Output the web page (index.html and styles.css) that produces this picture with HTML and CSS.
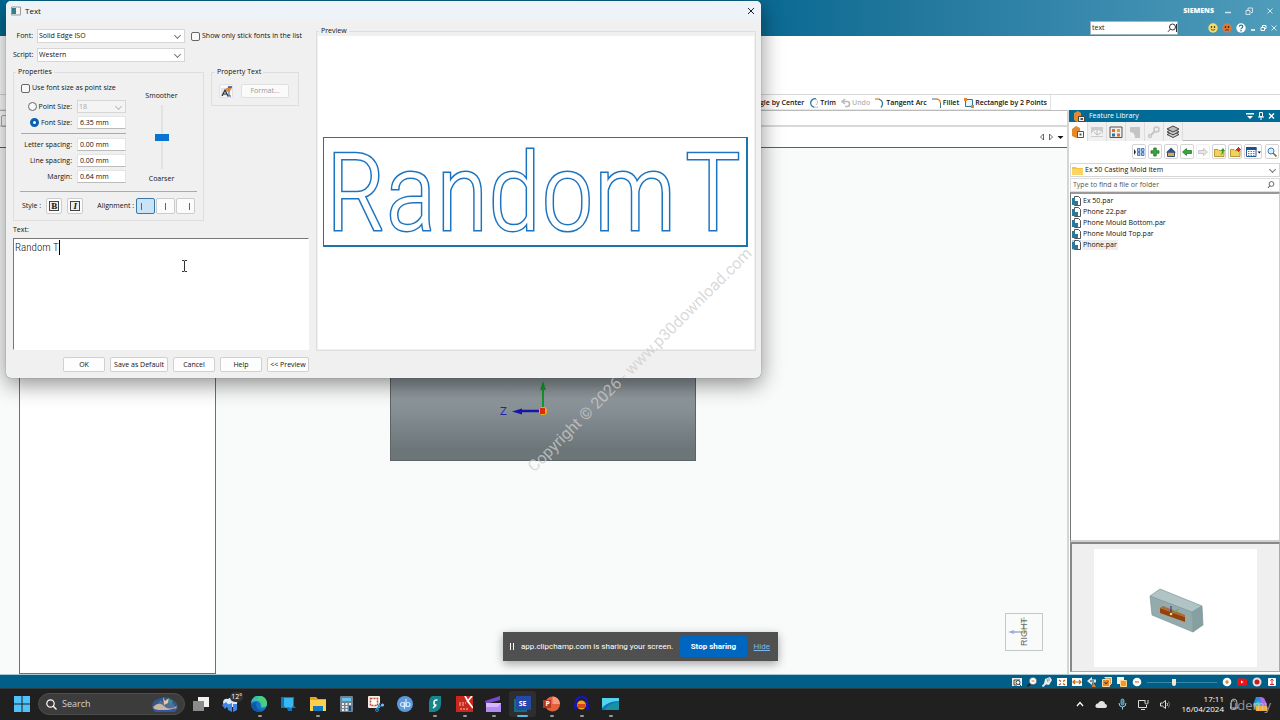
FILE: index.html
```html
<!DOCTYPE html>
<html lang="en">
<head>
    <meta charset="UTF-8">
    <meta name="viewport" content="width=device-width, initial-scale=1.0">
    <title>Solid Edge - Text</title>
    <link rel="stylesheet" href="styles.css">
</head>
<body>
    <!-- Title bar -->
    <header class="titlebar">
        <div class="title-row">
            <span class="brand">SIEMENS</span>
            <button class="win-btn" aria-label="Minimize"><svg width="8" height="8"><path d="M1 5.500h6" stroke="#cfe3ec" stroke-width="1.500"/></svg></button>
            <button class="win-btn" aria-label="Restore"><svg width="8" height="8"><path d="M1 3.500h4v4H1zM3 3V1h4.500v4.500H6" fill="none" stroke="#cfe3ec"/></svg></button>
            <button class="win-btn" aria-label="Close"><svg width="8" height="8"><path d="M1.500 1.500l5 5M6.500 1.500l-5 5" stroke="#cfe3ec"/></svg></button>
        </div>
        <div class="tool-row">
            <div class="command-search">
                <input type="text" value="text" aria-label="Command search">
                <svg width="10" height="10"><circle cx="5.500" cy="4" r="3" fill="none" stroke="#333"/><path d="M3.300 6.200L1 8.800M9.500 1v8" stroke="#333"/></svg>
            </div>
            <div class="tool-icons">
                <svg width="10" height="10"><circle cx="5" cy="5" r="4.700" fill="#f3dc6c"/><circle cx="3.500" cy="4" r=".8"/><circle cx="6.500" cy="4" r=".8"/><path d="M2.800 6.300q2.200 2 4.400 0" fill="none" stroke="#4d3b00" stroke-width=".8"/></svg>
                <svg width="10" height="10"><circle cx="5" cy="5" r="4.700" fill="#d9793a"/><circle cx="3.500" cy="4" r=".8"/><circle cx="6.500" cy="4" r=".8"/><path d="M3 7.500q2-2 4 0" fill="none" stroke="#5a1c00" stroke-width=".8"/></svg>
                <svg width="10" height="10"><circle cx="5" cy="5" r="4.700" fill="#fff"/><path d="M3.300 3.800q.2-1.700 1.800-1.700t1.700 1.500q0 .8-1 1.400t-.7 1.300" fill="none" stroke="#2d6e93" stroke-width="1.200"/><circle cx="5" cy="7.800" r=".8" fill="#2d6e93"/></svg>
                <svg width="6" height="8"><path d="M1 6h4" stroke="#fff" stroke-width="1.500"/></svg>
                <svg width="7" height="8"><path d="M1 3.500h3.500v3H1zM2.500 3V1.500H6v3H5" fill="none" stroke="#fff"/></svg>
                <svg width="6" height="8"><path d="M.5 1.500l5 5M5.500 1.500l-5 5" stroke="#d5e7ef"/></svg>
            </div>
        </div>
    </header>

    <div class="ribbon"></div>

    <div class="command-bar">
        <div class="commands">
            <button class="command">Rectangle by Center</button>
            <button class="command"><svg width="10" height="10"><path d="M7 .8A4.200 4.200 0 1 0 5 9.200" fill="none" stroke="#2f7796" stroke-width="1.300"/><path d="M7 1q3 3 0 6M5 9.200h4" fill="none" stroke="#999" stroke-dasharray="1.500 1"/></svg>Trim</button>
            <button class="command disabled"><svg width="10" height="10"><path d="M4 1L1 3.500 4 6M1.500 3.500H6a2.500 2.500 0 0 1 0 5H4" fill="none" stroke="#bbb" stroke-width="1.600"/></svg>Undo</button>
            <button class="command"><svg width="10" height="10"><path d="M0 1h4" stroke="#e08a2c" stroke-width="1.300"/><path d="M4 1q6 3 2 8.500" fill="none" stroke="#2f7796" stroke-width="1.300"/></svg>Tangent Arc</button>
            <button class="command"><svg width="10" height="10"><path d="M0 1h4" stroke="#2f7796"/><path d="M4 1q4 0 4.500 4" fill="none" stroke="#e08a2c" stroke-width="1.300"/><path d="M8.500 5v5" stroke="#2f7796"/></svg>Fillet</button>
            <button class="command"><svg width="10" height="10"><path d="M1.500 1.500h7v7h-7z" fill="#e9f4f9" stroke="#2f7796"/><path d="M0 0h3v3H0zM7 7h3v3H7z" fill="#e08a2c"/></svg>Rectangle by 2 Points</button>
        </div>
    </div>

    <main class="workspace">
        <section class="document">
            <div class="doc-strip"><span class="doc-grip"></span></div>
            <div class="doc-tabs">
                <svg width="6" height="8"><path d="M4.500 1v6L1.500 4z" fill="#fff" stroke="#444" stroke-width=".8"/></svg>
                <svg width="6" height="8"><path d="M1.500 1v6L4.500 4z" fill="#fff" stroke="#444" stroke-width=".8"/></svg>
                <svg width="7" height="8"><path d="M.5 3h6L3.500 6z" fill="#111"/></svg>
            </div>
            <div class="canvas">
                <div class="pathfinder"></div>
                <div class="model">
                    <svg width="60" height="50" class="axes">
                        <text x="3" y="42" class="axis-label">Z</text>
                        <path d="M45 38H25" stroke="#1616a8" stroke-width="2.500"/>
                        <path d="M15 38.500l10-3v6z" fill="#1616a8"/>
                        <path d="M46 37V17" stroke="#129a2c" stroke-width="2"/>
                        <path d="M46 8l-3 9h6z" fill="#129a2c"/>
                        <circle cx="46" cy="38" r="4" fill="#f0b400"/>
                        <path d="M43 35h5v6h-5z" fill="#e02a10"/>
                    </svg>
                </div>
                <div class="view-cube">
                    <svg width="36" height="36"><path d="M18 18V3" stroke="#9fe0a8" stroke-width="1.500"/><path d="M18 18H7" stroke="#a6a6e0" stroke-width="1.500"/><path d="M2 18l6-2v4z" fill="#a6a6e0"/><circle cx="18" cy="18" r="2" fill="#d8d06a"/></svg>
                    <span>RIGHT</span>
                </div>
            </div>
        </section>

        <!-- Feature Library -->
        <aside class="library">
            <div class="library-title">
                <svg width="12" height="11"><path d="M1 2l4-2 3 2v8l-4 1-3-2z" fill="#e58a2b"/><path d="M5.500 5.500h6v5h-6z" fill="#eee" stroke="#444"/><path d="M7.500 7h2.500v2H7.500z" fill="#555"/></svg>
                <span>Feature Library</span>
                <svg width="8" height="8"><path d="M0 1h8v1.500H0zM1 4h6L4 7z" fill="#fff"/></svg>
                <svg width="6" height="8"><path d="M1.500.5h3v4h-3zM0 5h6M3 5v3" fill="none" stroke="#fff"/></svg>
                <svg width="7" height="8"><path d="M1 1.500l5 5M6 1.500l-5 5" stroke="#fff" stroke-width="1.400"/></svg>
            </div>
            <div class="library-tabs">
                <button class="tab active" aria-label="Library"><svg width="14" height="14"><path d="M1 4l4-3 4 2v9l-4 1-4-2z" fill="#e58a2b"/><path d="M6.500 6.500h6v6h-6z" fill="#fff" stroke="#555"/><path d="M8.500 8.500h2v2h-2z" fill="#555"/></svg></button>
                <button class="tab" aria-label="Web"><svg width="14" height="14"><path d="M1 2h12v10H1z" fill="#ccc"/><path d="M1 11a6 6 0 0 1 12 0z" fill="#f4f4f4"/><path d="M7 10L4 7M7 10l4-2M7 10V5" stroke="#bbb"/></svg></button>
                <button class="tab" aria-label="Parts"><svg width="14" height="14"><path d="M1 2h12v10.500H1z" fill="#eee" stroke="#555"/><path d="M3 4h3v3H3zM8 8.500h3v3H8z" fill="#e06a2b"/><path d="M8 4h3v3H8z" fill="#e5a32b"/><path d="M3 8.500h3v3H3z" fill="#2f7796"/></svg></button>
                <button class="tab" aria-label="Sheets"><svg width="14" height="14"><path d="M2 2h10v11H2z" fill="#c4c4c4"/><path d="M2 7q5 0 5 6H2z" fill="#f2f2f2"/></svg></button>
                <button class="tab" aria-label="Links"><svg width="14" height="14"><circle cx="9.500" cy="4.500" r="2.500" fill="none" stroke="#c4c4c4" stroke-width="1.500"/><circle cx="3" cy="11" r="1.500" fill="none" stroke="#c4c4c4" stroke-width="1.300"/><path d="M8 6L4 10" stroke="#c4c4c4" stroke-width="1.800"/></svg></button>
                <button class="tab" aria-label="Layers"><svg width="14" height="14"><path d="M1 9.500L7 6.500l6 3-6 3z" fill="#ccc" stroke="#444"/><path d="M1 6.800L7 3.800l6 3-6 3z" fill="#ccc" stroke="#444"/><path d="M1 4L7 1l6 3-6 3z" fill="#bbb" stroke="#444"/></svg></button>
                <span class="tab-rest"></span>
            </div>
            <div class="library-tools">
                <button aria-label="Tree"><svg width="11" height="10"><path d="M0 2l2 3-2 3z" fill="#223"/><path d="M3.500 1.500H6v3H3.500zM7.500 1.500H10v3H7.500zM3.500 5.500H6v3H3.500zM7.500 5.500H10v3H7.500z" fill="#9cc4ee" stroke="#3566b0" stroke-width=".8"/></svg></button>
                <button aria-label="Add"><svg width="10" height="10"><path d="M3.700 1h2.600v2.700H9v2.600H6.300V9H3.700V6.300H1V3.700h2.700z" fill="#34a83a" stroke="#1d6b22" stroke-width=".7"/></svg></button>
                <button aria-label="Home"><svg width="10" height="10"><path d="M1.500 5h7v4.500h-7z" fill="#d9a95a" stroke="#37506d"/><path d="M0 5.500L5 .5l5 5z" fill="#2f5488"/></svg></button>
                <button aria-label="Back"><svg width="10" height="10"><path d="M.5 5L4.500 1.500v2H9.500v3h-5v2z" fill="#34a83a" stroke="#1d6b22" stroke-width=".7"/></svg></button>
                <button class="off" aria-label="Forward"><svg width="10" height="10"><path d="M9.500 5l-4-3.500v2H.5v3h5v2z" fill="#e6e6e6" stroke="#bbb" stroke-width=".8"/></svg></button>
                <button aria-label="Up"><svg width="11" height="10"><path d="M.5 2.500H4l1 1h5v6H.5z" fill="#f0d25e" stroke="#a98417" stroke-width=".8"/><path d="M5 8q3 0 3-4H6.500L9 1l2 3H9.500q0 4-4.500 4z" fill="#2b9a35"/></svg></button>
                <button aria-label="New folder"><svg width="11" height="10"><path d="M.5 2.500H4l1 1h5v6H.5z" fill="#f0d25e" stroke="#a98417" stroke-width=".8"/><path d="M8.500 0v5M6 2.500h5M7 1l3.200 3.200M10 1L7 4.200" stroke="#d62a1c"/></svg></button>
                <button class="wide" aria-label="Views"><svg width="15" height="10"><path d="M.5.5h9.500v9H.5z" fill="#fff" stroke="#2a5a9a"/><path d="M0 0h10.500v3H0z" fill="#1f4f96"/><path d="M2 4.500h7M2 6.500h7M2 8.300h7" stroke="#4d86c4" stroke-dasharray="1.500 1"/><path d="M11.500 4.500h3.500L13.300 6.500z" fill="#111"/></svg></button>
                <button class="find" aria-label="Find"><svg width="10" height="10"><circle cx="4" cy="4" r="3" fill="#d8efff" stroke="#3a7db5"/><path d="M6.200 6.200L9.500 9.500" stroke="#8a6a3a" stroke-width="1.600"/></svg></button>
            </div>
            <div class="combo folder-combo">
                <svg width="11" height="9"><path d="M0 1h4l1 1h6v7H0z" fill="#f5c242"/><path d="M0 3h11v6H0z" fill="#fbd667"/></svg>
                <select aria-label="Folder"><option>Ex 50 Casting Mold Item</option></select>
            </div>
            <div class="file-search">
                <input type="text" placeholder="Type to find a file or folder" aria-label="Find file">
                <svg width="8" height="8"><circle cx="4.500" cy="3" r="2.400" fill="none" stroke="#444" stroke-width=".8"/><path d="M2.800 4.800L.8 7" stroke="#444"/></svg>
            </div>
            <ul class="files">
                <li><svg class="par" width="9" height="10"><use href="#par"/></svg><span>Ex 50.par</span></li>
                <li><svg class="par" width="9" height="10"><use href="#par"/></svg><span>Phone 22.par</span></li>
                <li><svg class="par" width="9" height="10"><use href="#par"/></svg><span>Phone Mould Bottom.par</span></li>
                <li><svg class="par" width="9" height="10"><use href="#par"/></svg><span>Phone Mould Top.par</span></li>
                <li class="selected"><svg class="par" width="9" height="10"><use href="#par"/></svg><span>Phone.par</span></li>
            </ul>
            <div class="file-preview">
                <div class="preview-card">
                    <svg width="60" height="50">
                        <path d="M4 10L14 3l42 17-10 8z" fill="#b0c4c5"/>
                        <path d="M4 10l42 16 1 20L6 29z" fill="#93abad"/>
                        <path d="M46 26l10-6 1 19-10 7z" fill="#86a0a2"/>
                        <path d="M4 10l42 16 1 20L6 29zM4 10L14 3l42 17-10 6M56 20l1 19-10 7" fill="none" stroke="#7d9597" stroke-width=".7"/>
                        <path d="M14 22l25 9v5L14 27z" fill="#96400a"/><path d="M14 22l3-2 22 9v2z" fill="#b06a35"/>
                        <path d="M25 28V20" stroke="#27278f"/><path d="M25 28l8-5" stroke="#5fae4c"/><circle cx="25" cy="28" r="1.200" fill="#ffe75a"/>
                    </svg>
                </div>
            </div>
        </aside>
    </main>

    <!-- Status bar -->
    <div class="statusbar">
        <svg width="10" height="10"><path d="M0 1h10v8H0z" fill="#eee"/><path d="M2 3v5M2 3h6M2 8h3" stroke="#444" fill="none"/><circle cx="6" cy="5.500" r="2" fill="#fff" stroke="#444"/><path d="M7 7l2 2" stroke="#444"/></svg>
        <svg width="10" height="10"><path d="M3.500 6.500L.5 9.500" stroke="#222" stroke-width="1.800"/><circle cx="6" cy="4" r="3.600" fill="#fff" stroke="#555" stroke-width=".5"/><path d="M4.500 4h3" stroke="#c77b2d"/></svg>
        <svg width="10" height="10"><path d="M3.500 6.500L.5 9.500" stroke="#ddd" stroke-width="2"/><path d="M3 2l5-2 2 3-3 5-5-1z" fill="#e8eef0"/><path d="M5 2l1 3M7 1v3" stroke="#89a"/></svg>
        <svg width="10" height="10"><path d="M0 1h10v8H0z" fill="#fff"/><path d="M2 3l2 1.500M8 3L6 4.500M2 8l2-1.500M8 8L6 6.500" stroke="#b8641a" stroke-width="1.300"/></svg>
        <svg width="10" height="10"><path d="M0 1h10v8H0z" fill="#fff"/><path d="M1 5h8M3 3L1 5l2 2M7 3l2 2-2 2" fill="none" stroke="#c26c1c" stroke-width="1.200"/></svg>
        <svg width="10" height="10"><path d="M5 0L0 4l5 4V5.500h4v-3H5z" fill="#dfe6e9"/><path d="M6 5l3 5H5z" fill="#e0832a"/><path d="M3 4h4" stroke="#333"/></svg>
        <svg width="10" height="10"><path d="M2.500.5h7v6l-2 2" fill="#d6a05a" stroke="#ffe2b5"/><path d="M.5 2.500h7v7h-7z" fill="#e68a25" stroke="#ffd9a5"/><path d="M2.500 5l1.500 2 2-2.500" fill="none" stroke="#333"/></svg>
        <svg width="10" height="10"><path d="M0 0h7v7H0z" fill="#f6f2ea"/><path d="M3.500 3.500h6v6h-6z" fill="#ef9a2c" stroke="#ffd596"/></svg>
        <svg width="10" height="10"><circle cx="5" cy="5" r="4.300" fill="#fff"/><path d="M3 5h4" stroke="#c77b2d" stroke-width="1.200"/></svg>
        <input type="range" class="zoom" min="0" max="100" value="38" aria-label="Zoom">
        <svg width="10" height="10"><circle cx="5" cy="5" r="4.300" fill="#fff"/><path d="M3 5h4M5 3v4" stroke="#c77b2d" stroke-width="1.200"/></svg>
        <svg width="10" height="10"><rect y="1.500" width="10" height="7" rx="1.500" fill="#f01212"/><path d="M4 3.500v3L6.500 5z" fill="#fff"/></svg>
        <svg width="10" height="10"><circle cx="5" cy="5" r="4.500" fill="#e9dede"/><circle cx="5" cy="5" r="2.500" fill="#cc1b1b"/></svg>
        <svg width="10" height="10"><rect x="1" y="1" width="8" height="8" rx="1" fill="#fff"/><path d="M5 7V2M3.500 3.500L5 2l1.500 1.500M3 7.500h4" fill="none" stroke="#c22"/></svg>
    </div>

    <!-- Windows taskbar -->
    <footer class="taskbar">
        <button class="start" aria-label="Start"><svg width="16" height="16"><path d="M0 0h7.500v7.500H0zM8.500 0H16v7.500H8.500zM0 8.500h7.500V16H0zM8.500 8.500H16V16H8.500z" fill="#4fc3f7"/></svg></button>
        <div class="task-search">
            <svg width="11" height="11"><circle cx="4.500" cy="4.500" r="3.700" fill="none" stroke="#fff" stroke-width="1.200"/><path d="M7.300 7.300L10.500 10.500" stroke="#fff" stroke-width="1.300"/></svg>
            <input type="text" placeholder="Search" aria-label="Search">
            <svg width="28" height="16">
                <path d="M1 12Q1 4 7 3q8-4 15 1 5 3 5 8l-3 4H4z" fill="#34568c"/>
                <path d="M3 12l7-8 4 5 4-7 8 11z" fill="#4f6f9a"/>
                <path d="M2 11q6-6 11-1t13 0l-2 4H4z" fill="#c8b7a0"/><path d="M12 1l2 4 4-3-1 5-4 2z" fill="#e9c6a3"/>
                <path d="M3 13q10 3 22-1l-2 4H5z" fill="#3552a5"/><path d="M17 2l5 3-3 4z" fill="#2f9187"/>
            </svg>
        </div>
        <nav class="apps">
            <button class="app" aria-label="Task view"><svg width="16" height="16"><path d="M5 1h11v10H5z" fill="#f2f2f2"/><path d="M0 5h11v10H0z" fill="#8b8b8b"/></svg></button>
            <button class="app weather" aria-label="Weather"><svg width="16" height="16"><path d="M1 6q1-4 5-3 3-3 6 0 4 1 3 5l-1 3H2z" fill="#dfe9f6"/><path d="M0 9l4-3 3 3-4 4zM5 9l5-2v9l-4-2zM11 8h4v6l-4 2z" fill="#3f86e8"/></svg><span>12°</span></button>
            <button class="app running" aria-label="Edge"><svg width="16" height="16"><circle cx="8" cy="8" r="8" fill="#1673c4"/><path d="M0 7a8 8 0 0 1 16 1q0 4-5 3.500-2-.5-1-2Q9 5 5 5 2 5 0 7z" fill="#34c1b5"/><path d="M8 0q7 0 8 7-1 4-5 4 2-6-5-7z" fill="#4fce77"/><path d="M5 8q0 6 7 7Q3 18 0 9q2-3 6-3Q5 7 5 8z" fill="#0d56a8"/></svg></button>
            <button class="app" aria-label="Devices"><svg width="16" height="16"><path d="M1 1h13v9l2 2h-4v3H8l-1-3H1z" fill="#1174bd"/><path d="M4 2h9v8l-2 2-3-1-2 1-2-2z" fill="#3bb7ef"/></svg></button>
            <button class="app running" aria-label="Explorer"><svg width="16" height="16"><path d="M0 1h6l2 2h8v12H0z" fill="#e9a51f"/><path d="M0 4h16v11H0z" fill="#ffd04d"/><path d="M3 10h10v5H3z" fill="#1279c7"/></svg></button>
            <button class="app" aria-label="Calculator"><svg width="14" height="16"><rect width="13" height="16" rx="1" fill="#75818c"/><path d="M2 2h9v3H2z" fill="#62c5f2"/><path d="M2 7h2v2H2zM5.500 7h2v2h-2zM9 7h2v2H9zM2 10h2v2H2zM5.500 10h2v2h-2zM2 13h2v2H2zM5.500 13h2v2h-2z" fill="#e7edf2"/><path d="M9 10h2v5H9z" fill="#164e85"/></svg></button>
            <button class="app" aria-label="Snipping tool"><svg width="16" height="16"><rect width="12" height="12" rx="1" fill="#f4eeee"/><path d="M2.500 2.500h7v7h-7z" fill="#fff" stroke="#c34a2b" stroke-width="1.500" stroke-dasharray="2 1"/><path d="M9 14l3-7M15 9l-6 3" stroke="#1f8bd0" stroke-width="1.300"/><circle cx="9" cy="14" r="1.500" fill="none" stroke="#1f8bd0"/><circle cx="14.500" cy="9" r="1.500" fill="#7ec3ef"/></svg></button>
            <button class="app" aria-label="qBittorrent"><svg width="16" height="16"><circle cx="8" cy="8" r="8" fill="#5c9adb"/><circle cx="5.500" cy="8.500" r="2" fill="none" stroke="#d4e9ff" stroke-width="1.200"/><path d="M7.500 6v7M9 3v8" stroke="#d4e9ff" stroke-width="1.200"/><circle cx="11" cy="8.500" r="2" fill="none" stroke="#d4e9ff" stroke-width="1.200"/></svg></button>
            <button class="app running" aria-label="VPN"><svg width="14" height="16"><path d="M4 0h9v8q0 6-6 8H1V7q0-5 3-7z" fill="#16858c"/><path d="M9.500 4Q6 3.500 6 6.500T7.500 9 5 12" fill="none" stroke="#fff" stroke-width="1.600"/></svg></button>
            <button class="app running" aria-label="PDF"><svg width="17" height="16"><path d="M0 0h17v16H0z" fill="#c8281c"/><path d="M9 0q3 6 8 12M16 0l-5 6" stroke="#fff" stroke-width="1.700" fill="none"/><path d="M3 7h7M3 9h5M4 13h9" stroke="#f4b9b2" stroke-dasharray="2 1"/></svg></button>
            <button class="app running" aria-label="Clipchamp"><svg width="17" height="16"><path d="M0 5l15-5v4L1 8z" fill="#7a49cf"/><path d="M1 7h15v9H1z" fill="#b48bf2"/><path d="M1 7h15l-3 4H1z" fill="#d4b8ff"/></svg></button>
            <button class="app running current" aria-label="Solid Edge"><svg width="17" height="16"><path d="M0 3h13v13H0z" fill="#12707d"/><path d="M2 0h15v14H2z" fill="#2448a8"/></svg><span>SE</span></button>
            <button class="app running ppt" aria-label="PowerPoint"><svg width="17" height="16"><circle cx="9.500" cy="8" r="7.500" fill="#e2603c"/><path d="M9.500.5A7.500 7.500 0 0 1 17 8H9.500z" fill="#f59a7c"/><path d="M0 4h8v8H0z" fill="#b8371c"/></svg><span>P</span></button>
            <button class="app running" aria-label="Audacity"><svg width="17" height="16"><path d="M3 12Q1 1 8.500 1T14 12" fill="none" stroke="#1616c8" stroke-width="2"/><circle cx="8.500" cy="9" r="4.500" fill="#f0a31b"/><path d="M4.500 9h8M5 11h7" stroke="#d42b14" stroke-width="1.500"/><path d="M1 8h3v6H1zM13 8h3v6h-3z" fill="#1616a0"/></svg></button>
            <button class="app running" aria-label="Photos"><svg width="17" height="14"><path d="M0 1h17v12H0z" fill="#0f75b5"/><path d="M0 1h17v3Q6 4 0 11z" fill="#53d3ee"/><path d="M3 13Q6 6 17 5v8z" fill="#1792a5"/></svg></button>
        </nav>
        <div class="tray">
            <svg width="8" height="8"><path d="M1 6l3-3.500L7 6" fill="none" stroke="#fff" stroke-width="1.200"/></svg>
            <svg width="12" height="10"><path d="M3 9Q0 9 .5 6.500T3 4.500Q4 1.500 7 2t3 3q2 0 2 2t-2 2z" fill="#e2e2e2"/></svg>
            <svg width="9" height="12"><rect x="3" y="1" width="3" height="6" rx="1.500" fill="#3c7f99" stroke="#8fd3ea" stroke-width=".7"/><path d="M1 5q0 4 3.500 4T8 5M4.500 9v2.500" fill="none" stroke="#8fd3ea"/></svg>
            <svg width="11" height="11"><path d="M7 1.500H.5v7h8V6M3 10.500h4M7 1v3q0 1 1.500 1T10 4V1" fill="none" stroke="#ddd"/></svg>
            <svg width="11" height="11"><path d="M.5 4h2l3-2.500v8L2.500 7h-2zM7 4q1 1.500 0 3" fill="none" stroke="#ddd"/><path d="M8.500 2.500q2 3 0 6" fill="none" stroke="#777"/></svg>
            <div class="clock"><span>17:11</span><span>16/04/2024</span></div>
            <svg class="bell" width="10" height="12"><path d="M2 9V5q0-4 3-4t3 4v4l1 1H1zM4 11h2" fill="none" stroke="#bbb"/></svg>
            <svg class="copilot" width="16" height="16"><path d="M4 1h6l2 4-4 10H4L1 9z" fill="#2b8fe0"/><path d="M8 1l4 1 3 6-3 6H7l2-6z" fill="#b26ae8"/><path d="M2 8l5-3 2 5-4 5z" fill="#48c3b8"/><path d="M4 10h11v5H4z" fill="#f2b23a"/></svg>
            <span class="udemy">ûdemy</span>
        </div>
    </footer>

    <!-- Text dialog -->
    <form class="dialog">
        <div class="dialog-title">
            <svg width="10" height="10"><path d="M.5 1h9v8h-9z" fill="#f5f5f5" stroke="#999"/><path d="M1 2h4v6H1z" fill="#2f8088"/></svg>
            <span>Text</span>
            <button type="button" aria-label="Close"><svg width="8" height="8"><path d="M1 1l6 6M7 1L1 7" stroke="#222"/></svg></button>
        </div>
        <div class="dialog-body">
            <div class="settings">
                <div class="font-grid">
                    <label for="font">Font:</label>
                    <div class="combo"><select id="font"><option>Solid Edge ISO</option></select></div>
                    <label class="check"><input type="checkbox">Show only stick fonts in the list</label>
                    <label for="script">Script:</label>
                    <div class="combo"><select id="script"><option>Western</option></select></div>
                </div>
                <div class="groups">
                    <fieldset class="properties">
                        <legend>Properties</legend>
                        <div class="sizes">
                            <div class="size-fields">
                                <label class="check use-point"><input type="checkbox">Use font size as point size</label>
                                <div class="field">
                                    <label class="check"><input type="radio" name="size">Point Size:</label>
                                    <div class="combo off"><select aria-label="Point size" disabled><option>18</option></select></div>
                                </div>
                                <div class="field">
                                    <label class="check"><input type="radio" name="size" checked>Font Size:</label>
                                    <input type="text" value="6.35 mm" aria-label="Font size">
                                </div>
                                <hr>
                                <div class="field"><label for="letter">Letter spacing:</label><input type="text" id="letter" value="0.00 mm"></div>
                                <div class="field"><label for="line">Line spacing:</label><input type="text" id="line" value="0.00 mm"></div>
                                <div class="field"><label for="margin">Margin:</label><input type="text" id="margin" value="0.64 mm"></div>
                            </div>
                            <div class="smoothness">
                                <label for="smooth">Smoother</label>
                                <input type="range" id="smooth" min="0" max="100" value="50">
                                <span>Coarser</span>
                            </div>
                        </div>
                        <hr class="wide-rule">
                        <div class="style-row">
                            <span>Style :</span>
                            <button type="button" class="bold"><b>B</b></button>
                            <button type="button" class="italic"><b>I</b></button>
                            <span class="align-label">Alignment :</span>
                            <div class="align">
                                <button type="button" class="left on" aria-label="Left"><i></i></button>
                                <button type="button" class="center" aria-label="Center"><i></i></button>
                                <button type="button" class="right" aria-label="Right"><i></i></button>
                            </div>
                        </div>
                    </fieldset>
                    <fieldset class="property-text">
                        <legend>Property Text</legend>
                        <button type="button" class="pick" aria-label="Property text"><svg width="11" height="11"><path d="M0 2h6v8H0z" fill="#dfe4ee"/><path d="M1 10l3-6 3 6M2 8h4" fill="none" stroke="#233" stroke-width="1.200"/><path d="M8 4v6M6 10h4" stroke="#3a4f8f"/><path d="M4 3l4-2 3 1-2 3-3 1z" fill="#d98a3c"/><path d="M7 1h4" stroke="#2a4c9c" stroke-width="1.500"/></svg></button>
                        <button type="button" class="format" disabled>Format...</button>
                    </fieldset>
                </div>
                <label class="text-label" for="content">Text:</label>
                <div class="editor">
                    <textarea id="content" spellcheck="false">Random T</textarea>
                    <span class="caret"></span>
                    <svg class="ibeam" width="7" height="12"><path d="M1 .5h2l.5.500.500-.500h2M1 11.500h2l.5-.500.500.500h2M3.500 1v10" fill="none" stroke="#333"/></svg>
                </div>
                <div class="buttons">
                    <button type="button">OK</button>
                    <button type="button" class="save">Save as Default</button>
                    <button type="button">Cancel</button>
                    <button type="button">Help</button>
                    <button type="button">&lt;&lt; Preview</button>
                </div>
            </div>
            <fieldset class="preview">
                <legend>Preview</legend>
                <div class="sheet">
                    <div class="outline"><span>Random</span><span>T</span></div>
                </div>
            </fieldset>
        </div>
    </form>

    <div class="share-bar">
        <span class="pause"></span>
        <span>app.clipchamp.com is sharing your screen.</span>
        <button>Stop sharing</button>
        <a href="#">Hide</a>
    </div>

    <div class="watermark">Copyright © 2026 - www.p30download.com</div>

    <svg class="defs" width="0" height="0">
        <symbol id="par" viewBox="0 0 9 10"><path d="M2.500.5h4l2 2v7h-6z" fill="#fff" stroke="#555"/><path d="M0 2h3v3h3v4H0z" fill="#2f7796"/></symbol>
    </svg>
</body>
</html>
```
FILE: styles.css
```css
* {
    margin: 0;
    padding: 0;
    box-sizing: border-box;
}

body {
    font-family: "Open Sans", "Noto Sans", sans-serif;
    font-size: 7px;
    line-height: 10px;
    color: #111;
    height: 100vh;
    overflow: hidden;
    display: flex;
    flex-direction: column;
    background: #fff;
}

button, input, select, textarea {
    font: inherit;
    color: inherit;
    border: none;
    background: none;
    outline: none;
}

input, select {
    min-width: 0;
}

svg {
    display: block;
    flex: none;
}

.defs {
    position: absolute;
}

/* Title bar */
.titlebar {
    height: 36px;
    background: linear-gradient(90deg, #006a92 0%, #00648d 55%, #0b6a93 60%, #1f769b 70%, #3082a8 80%, #4f9cba 100%);
    color: #fff;
}

.title-row {
    height: 21px;
    display: flex;
    justify-content: flex-end;
    align-items: center;
    gap: 13px;
    padding-right: 6px;
}

.brand {
    font-weight: 800;
}

.win-btn {
    width: 8px;
}

.title-row .brand + .win-btn {
    margin-left: -3px;
}

.tool-row {
    display: flex;
    justify-content: flex-end;
    align-items: center;
    gap: 30px;
    padding-right: 3px;
}

.command-search {
    width: 88px;
    height: 14px;
    background: #fff;
    color: #222;
    border: 1px solid #9cb7c4;
    display: flex;
    align-items: center;
}

.command-search input {
    flex: 1;
    padding-left: 1px;
}

.tool-icons {
    display: flex;
    align-items: center;
    gap: 4px;
}

/* Ribbon */
.ribbon {
    height: 59px;
    border-bottom: 1px solid #d8d8d8;
}

.command-bar {
    height: 15px;
}

.commands {
    height: 15px;
    margin-right: 229px;
    padding: 1px 3px 0 0;
    border-right: 1px solid #e2e2e2;
    border-bottom: 1px solid #e8e8e8;
    display: flex;
    justify-content: flex-end;
    gap: 5px;
}

.command {
    display: flex;
    align-items: center;
    gap: 1px;
    font-weight: 600;
    white-space: nowrap;
}

.command.disabled {
    color: #b5b5b5;
}

/* Workspace */
.workspace {
    flex: 1;
    display: flex;
    min-height: 0;
}

.document {
    flex: 1;
    display: flex;
    flex-direction: column;
}

.doc-strip {
    height: 17px;
    border-top: 1px solid #bbb;
    border-bottom: 2px solid #d8d8d8;
    padding-top: 4px;
}

.doc-grip {
    display: block;
    width: 12px;
    height: 12px;
    margin-left: 1px;
    border: 1px solid #aaa;
    border-radius: 2px;
}

.doc-tabs {
    height: 21px;
    border-bottom: 1px solid #2f6f88;
    display: flex;
    justify-content: flex-end;
    align-items: center;
    gap: 3px;
    padding-right: 3px;
}

.canvas {
    flex: 1;
    position: relative;
    background: #f9fbfb;
    padding-left: 19px;
    display: flex;
}

.pathfinder {
    width: 197px;
    background: #fff;
    border: 1px solid #5b7391;
}

.model {
    position: absolute;
    left: 390px;
    top: 52px;
    width: 306px;
    height: 261px;
    background: linear-gradient(#899297 70%, #8f989d 76%, #7d868b 86%, #6c7577 96%);
    border: 1px solid #5c6466;
}

.axes {
    position: absolute;
    left: 106px;
    bottom: 37px;
}

.axis-label {
    font: 10px "DejaVu Sans", sans-serif;
    fill: #2424b4;
}

.view-cube {
    position: absolute;
    right: 24px;
    bottom: 23px;
    width: 38px;
    height: 38px;
    border: 1px solid #c4c8c8;
}

.view-cube span {
    position: absolute;
    inset: 0;
    writing-mode: vertical-rl;
    transform: rotate(180deg);
    text-align: center;
    font: 9px/36px "Liberation Sans", sans-serif;
    color: #666;
}

/* Feature Library */
.library {
    width: 213px;
    border-left: 2px solid #d5d5d5;
    display: flex;
    flex-direction: column;
    background: #fff;
}

.library-title {
    height: 12px;
    background: #006b96;
    color: #fff;
    display: flex;
    align-items: center;
    gap: 4px;
    padding: 0 5px 0 4px;
}

.library-title span {
    flex: 1;
}

.library-tabs {
    height: 19px;
    display: flex;
    background: #f0f0f0;
}

.tab {
    width: 19px;
    display: grid;
    place-items: center;
    border-right: 1px solid #dcdcdc;
}

.tab.active {
    background: #fff;
}

.tab-rest {
    flex: 1;
    border-bottom: 1px solid #bbb;
}

.library-tools {
    display: flex;
    justify-content: flex-end;
    gap: 2px;
    padding: 3px 1px 4px 0;
}

.library-tools button {
    width: 14px;
    height: 15px;
    display: grid;
    place-items: center;
    border: 1px solid #d4d4d4;
    border-radius: 2px;
}

.library-tools .off {
    border-color: #f0f0f0;
}

.library-tools .wide {
    width: 18px;
}

.library-tools .find {
    margin-left: 1px;
}

.combo {
    position: relative;
    height: 14px;
    display: flex;
    align-items: center;
    background: #fff;
    border: 1px solid #d6d6d6;
}

.combo::after {
    content: "";
    position: absolute;
    right: 4px;
    top: 3px;
    width: 4px;
    height: 4px;
    border: solid #777;
    border-width: 0 1px 1px 0;
    transform: rotate(45deg);
    pointer-events: none;
}

.combo select {
    flex: 1;
    appearance: none;
    padding-left: 1px;
}

.folder-combo {
    margin-left: 1px;
    padding-left: 1px;
    gap: 1px;
}

.file-search {
    height: 14px;
    border: 1px solid #ddd;
    margin: 1px 0 0 1px;
    padding-right: 4px;
    display: flex;
    align-items: center;
}

.file-search input {
    flex: 1;
    padding-left: 2px;
}

.file-search input::placeholder {
    color: #555;
}

.files {
    flex: 1;
    list-style: none;
    margin-left: 1px;
    border-top: 2px solid #999;
    border-left: 1px solid #777;
    border-bottom: 2px solid #d0d0d0;
    border-right: 1px solid #ccc;
    padding-top: 1px;
}

.files li {
    height: 11px;
    display: flex;
    align-items: center;
    gap: 1px;
    padding-left: 1px;
}

.files span {
    padding: 0 1px;
}

.selected span {
    background: #eee;
}

.selected .par {
    background: #a9d4f5;
}

.file-preview {
    height: 130px;
    margin: 0 0 2px 1px;
    background: #efefef;
    border: 1px solid #aaa;
    border-left: 2px solid #888;
    border-top: 2px solid #888;
    padding: 5px 22px;
}

.preview-card {
    background: #fff;
    height: 118px;
    display: grid;
    place-items: center;
    padding-top: 6px;
}

/* Status bar */
.statusbar {
    height: 14px;
    background: #005f89;
    border-top: 1px solid #a9c8d5;
    display: flex;
    justify-content: flex-end;
    align-items: center;
    gap: 5px;
    padding: 1px 3px 0 0;
}

.zoom {
    appearance: none;
    width: 70px;
    height: 10px;
}

.zoom::-webkit-slider-runnable-track {
    height: 1px;
    background: #3b87a8;
}

.zoom::-webkit-slider-thumb {
    appearance: none;
    width: 4px;
    height: 7px;
    margin-top: -3px;
    background: #f0e8d8;
    border-radius: 0 0 2px 2px;
}

/* Taskbar */
.taskbar {
    height: 32px;
    background: #202020;
    border-top: 1px solid #343b3f;
    color: #fff;
    display: flex;
    align-items: center;
    padding: 0 12px 1px 14px;
}

.task-search {
    width: 147px;
    height: 22px;
    margin: 0 2px 0 8px;
    padding: 0 5px 0 7px;
    background: #3c3c3c;
    border: 1px solid #4d4d4d;
    border-radius: 11px;
    display: flex;
    align-items: center;
    gap: 5px;
}

.task-search input {
    flex: 1;
    font-size: 9px;
}

.task-search input::placeholder {
    color: #d5d5d5;
}

.apps {
    width: 437px;
    display: flex;
    justify-content: space-between;
}

.app {
    position: relative;
    width: 27px;
    height: 26px;
    display: grid;
    place-items: center;
    border-radius: 3px;
}

.running::after {
    content: "";
    position: absolute;
    left: 12px;
    bottom: 0;
    width: 4px;
    height: 2px;
    border-radius: 1px;
    background: #999;
}

.current {
    background: #2e2e2e;
}

.current::after {
    left: 8px;
    width: 11px;
    background: #5cb8e8;
}

.app span {
    position: absolute;
    font-weight: bold;
}

.weather span {
    top: 1px;
    right: 0;
    font-weight: normal;
    background: #333;
    border-radius: 5px;
    padding: 0 1px;
}

.ppt span {
    left: 7px;
}

.tray {
    position: relative;
    margin-left: auto;
    display: flex;
    align-items: center;
    gap: 11px;
}

.clock {
    display: flex;
    flex-direction: column;
    text-align: right;
    font-size: 8px;
    line-height: 10px;
}

.bell {
    margin-left: -6px;
}

.copilot {
    margin-left: 2px;
}

.udemy {
    position: absolute;
    right: -3px;
    top: 1px;
    font-size: 13px;
    line-height: 20px;
    color: rgba(200, 200, 200, 0.7);
}

/* Text dialog */
.dialog {
    position: absolute;
    left: 6px;
    top: 1px;
    width: 755px;
    background: #f0f0f0;
    border-radius: 5px;
    box-shadow: 0 0 1px #555, 0 6px 22px rgba(0, 0, 0, 0.45);
}

.dialog-title {
    height: 19px;
    background: #eef3f9;
    border-radius: 5px 5px 0 0;
    display: flex;
    align-items: center;
    gap: 4px;
    padding: 0 6px 0 5px;
}

.dialog-title span {
    flex: 1;
    font-size: 8px;
}

.dialog-body {
    display: flex;
    gap: 7px;
    padding: 6px 5px 6px 7px;
}

.settings {
    width: 296px;
    padding-top: 3px;
}

.font-grid {
    display: grid;
    grid-template-columns: 20px 148px 1fr;
    column-gap: 4px;
    row-gap: 5px;
    align-items: center;
}

.font-grid > label:not(.check) {
    text-align: right;
}

.font-grid .check {
    padding-left: 2px;
}

.check {
    display: flex;
    align-items: center;
    gap: 2px;
    white-space: nowrap;
}

.check input {
    appearance: none;
    width: 9px;
    height: 9px;
    flex: none;
    border: 1px solid #666;
    border-radius: 2px;
    background: #f8f8f8;
}

.check input[type="radio"] {
    border-radius: 50%;
}

.check input[type="radio"]:checked {
    border: 3px solid #0a5fae;
    background: #fff;
}

.groups {
    display: flex;
    align-items: flex-start;
    gap: 7px;
    margin-top: 5px;
}

fieldset {
    border: 1px solid #dedede;
    min-width: 0;
}

legend {
    margin-left: -4px;
    padding: 0 2px;
}

.properties {
    width: 191px;
    height: 154px;
    padding: 0 6px;
}

.sizes {
    display: flex;
}

.size-fields {
    width: 106px;
    display: flex;
    flex-direction: column;
    gap: 3px;
    padding-left: 1px;
}

.use-point {
    height: 20px;
    padding-top: 2px;
}

.field {
    display: flex;
    justify-content: flex-end;
    align-items: center;
    gap: 5px;
}

.field > input, .field .combo {
    width: 49px;
    height: 13px;
}

.field > input {
    background: #fff;
    border: 1px solid #e4e4e4;
    border-bottom-color: #bbb;
    padding-left: 2px;
}

.combo.off {
    background: #f4f4f4;
    color: #888;
}

.combo.off::after {
    border-color: #bbb;
}

hr {
    border: none;
    border-top: 1px solid #aaa;
    margin: 1px 0;
}

.smoothness {
    flex: 1;
    display: flex;
    flex-direction: column;
    align-items: center;
    padding-top: 14px;
}

#smooth {
    appearance: none;
    writing-mode: vertical-lr;
    width: 14px;
    height: 64px;
    margin: 4px 0 5px;
}

#smooth::-webkit-slider-runnable-track {
    width: 2px;
    background: #dfe3e3;
}

#smooth::-webkit-slider-thumb {
    appearance: none;
    width: 14px;
    height: 7px;
    margin-left: -6px;
    background: #0a72d0;
}

.wide-rule {
    margin-top: 7px;
}

.style-row {
    display: flex;
    align-items: center;
    padding: 5px 0 0 2px;
    white-space: nowrap;
}

.style-row button {
    height: 16px;
    border: 1px solid #ccc;
    border-radius: 2px;
    background: #fcfcfc;
    display: flex;
    align-items: center;
    justify-content: center;
}

.bold, .italic {
    width: 16px;
    margin-left: 5px;
}

.style-row b {
    width: 10px;
    height: 10px;
    border: 1px solid #444;
    background: #eee;
    font: bold 9px/9px "Liberation Serif", serif;
}

.italic b {
    font-style: italic;
}

.align-label {
    margin-left: 14px;
}

.align {
    display: flex;
    gap: 1px;
    margin-left: auto;
    padding-right: 2px;
}

.align button {
    width: 19px;
    padding: 0 4px;
}

.align i {
    width: 1px;
    height: 7px;
    background: #666;
}

.align .left {
    justify-content: flex-start;
}

.align .right {
    justify-content: flex-end;
}

.align .on {
    background: #cbe3f7;
    border-color: #3a78a8;
}

.property-text {
    width: 88px;
    height: 39px;
    padding: 7px 7px 0;
    display: flex;
    gap: 8px;
}

.property-text button {
    height: 14px;
    background: #fafafa;
    border: 1px solid #e0e0e0;
    border-radius: 2px;
}

.pick {
    width: 14px;
    display: grid;
    place-items: center;
}

.format {
    width: 48px;
    color: #999;
}

.text-label {
    display: block;
    margin: 4px 0 3px;
}

.editor {
    position: relative;
}

.editor textarea {
    display: block;
    width: 100%;
    height: 112px;
    background: #fff;
    border: 1px solid #fff;
    border-top: 1px solid #777;
    border-left: 1px solid #777;
    padding: 2px 1px;
    resize: none;
    font: 300 11px/14px "Roboto Condensed", "Liberation Sans Narrow", sans-serif;
}

.caret {
    position: absolute;
    left: 46px;
    top: 2px;
    width: 1px;
    height: 15px;
    background: #000;
}

.ibeam {
    position: absolute;
    left: 168px;
    top: 22px;
}

.buttons {
    display: flex;
    justify-content: flex-end;
    gap: 5px;
    margin-top: 7px;
}

.buttons button {
    width: 42px;
    height: 15px;
    background: #fdfdfd;
    border: 1px solid #d0d0d0;
    border-radius: 2px;
    white-space: nowrap;
}

.buttons .save {
    width: 58px;
}

.preview {
    flex: 1;
    height: 325px;
    padding: 0 1px 1px;
    display: flex;
}

.preview legend {
    height: 10px;
    margin-left: 1px;
}

.sheet {
    flex: 1;
    background: #fff;
    padding: 101px 6px 0 5px;
}

/* the stroke goes under the fill, so only the outer edge shows */
.outline {
    height: 110px;
    border: 1px solid #1c74ad;
    border-width: 1px 2px 2px 1px;
    padding: 0 5px 0 2px;
    display: flex;
    justify-content: space-between;
    font: 300 108px/110px "Roboto Condensed", "Liberation Sans Narrow", sans-serif;
    color: #fff;
    -webkit-text-stroke: 3px #1c74c0;
    paint-order: stroke fill;
}

/* Screen sharing bar */
.share-bar {
    position: absolute;
    left: 503px;
    bottom: 59px;
    height: 29px;
    width: 275px;
    background: #505050;
    color: #fff;
    box-shadow: 0 3px 10px rgba(0, 0, 0, 0.35);
    font-family: Roboto, sans-serif;
    font-size: 8px;
    display: flex;
    align-items: center;
    gap: 7px;
    padding: 0 8px 0 7px;
    white-space: nowrap;
}

.pause {
    width: 4px;
    height: 7px;
    border: solid #fff;
    border-width: 0 1px;
}

.share-bar button {
    width: 67px;
    height: 21px;
    background: #0067c0;
    border-radius: 2px;
    font-weight: bold;
}

.share-bar a {
    color: #7cb8ee;
    margin-left: auto;
}

.watermark {
    position: absolute;
    left: 50%;
    top: 50%;
    transform: translate(-50%, -50%) rotate(-45deg);
    font: 16px/20px Roboto, sans-serif;
    color: rgba(205, 205, 205, 0.75);
    white-space: nowrap;
    pointer-events: none;
}
```
